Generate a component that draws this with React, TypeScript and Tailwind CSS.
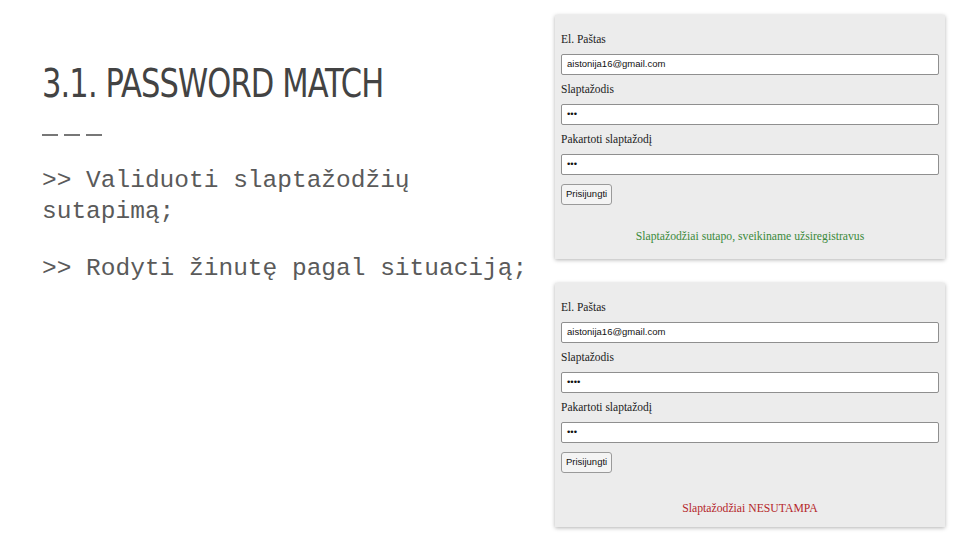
const serif = "font-['Liberation_Serif','Times_New_Roman',serif]";
const sans = "font-['Liberation_Sans',Arial,sans-serif]";

function Field({ label, value }: { label: string; value: string }) {
  return (
    <>
      <div className={`${serif} text-[11.5px] text-[#222] leading-[14px] mb-[8px]`}>{label}</div>
      <div className={`${sans} h-[21px] bg-white border border-[#8f8f8f] rounded-[2px] px-[5px] flex items-center text-[9.5px] text-[#111] mb-[7px]`}>
        {value}
      </div>
    </>
  );
}

function Panel({ pw1, pw2, msg, ok }: { pw1: string; pw2: string; msg: string; ok: boolean }) {
  return (
    <div className="w-[390px] h-[244px] bg-[#ececec] shadow-[0_1px_4px_rgba(0,0,0,0.3)] px-[6px] pt-[17px] flex flex-col">
      <Field label="El. Paštas" value="aistonija16@gmail.com" />
      <Field label="Slaptažodis" value={pw1} />
      <Field label="Pakartoti slaptažodį" value={pw2} />
      <div className="-mt-[3px]">
        <span className={`${sans} inline-flex items-center h-[21px] px-[4px] bg-[#f4f4f4] border border-[#9a9a9a] rounded-[3px] text-[9.5px] text-[#111]`}>
          Prisijungti
        </span>
      </div>
      <div className={`${serif} text-center text-[11.7px] ${ok ? "text-[#3b8a3b] mt-[23px]" : "text-[#b5262a] mt-[27px]"}`}>{msg}</div>
    </div>
  );
}

export default function App() {
  return (
    <div className="w-[960px] h-[540px] bg-white flex overflow-hidden">
      <div className="w-[555px] shrink-0 pl-[42px] pt-[59px]">
        <h1 className="font-['DejaVu_Sans_Condensed','Liberation_Sans',sans-serif] text-[39px] leading-[50px] text-[#434343] tracking-[-1px] whitespace-nowrap origin-left scale-x-[0.87]">
          3.1. PASSWORD MATCH
        </h1>
        <div className="flex gap-[6px] mt-[25px]">
          <span className="w-[16px] h-[1.5px] bg-[#777]" />
          <span className="w-[16px] h-[1.5px] bg-[#777]" />
          <span className="w-[16px] h-[1.5px] bg-[#777]" />
        </div>
        <div className="font-['Liberation_Mono','DejaVu_Sans_Mono',monospace] text-[24.5px] leading-[31px] text-[#5a5a5a] mt-[29px] whitespace-nowrap">
          <p>&gt;&gt; Validuoti slaptažodžių<br />sutapimą;</p>
          <p className="mt-[26px]">&gt;&gt; Rodyti žinutę pagal situaciją;</p>
        </div>
      </div>
      <div className="pt-[15px] flex flex-col gap-[24px]">
        <Panel pw1="•••" pw2="•••" msg="Slaptažodžiai sutapo, sveikiname užsiregistravus" ok />
        <Panel pw1="••••" pw2="•••" msg="Slaptažodžiai NESUTAMPA" ok={false} />
      </div>
    </div>
  );
}
